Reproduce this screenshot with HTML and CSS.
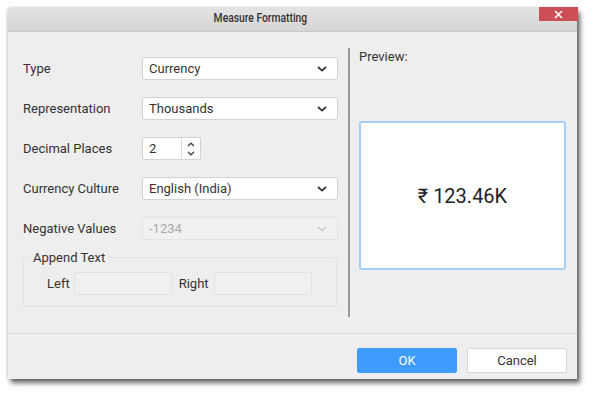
FILE: index.html
```html
<!DOCTYPE html>
<html>
<head>
<meta charset="utf-8">
<link rel="stylesheet" href="styles.css">
</head>
<body>
<div class="dialog">
  <div class="titlebar"><span class="title">Measure Formatting</span></div>
  <button class="close" aria-label="Close"><svg width="9" height="9" viewBox="0 0 9 9"><path d="M1 1L8 8M8 1L1 8" stroke="#fff" stroke-width="1.6" fill="none"/></svg></button>
  <div class="content">
    <div class="left">
      <div class="row"><span class="label">Type</span><div class="select"><span>Currency</span><svg class="chev" width="10" height="6" viewBox="0 0 10 6"><path d="M1 1L5 4.6L9 1" stroke="#333" stroke-width="1.8" fill="none"/></svg></div></div>
      <div class="row"><span class="label">Representation</span><div class="select"><span>Thousands</span><svg class="chev" width="10" height="6" viewBox="0 0 10 6"><path d="M1 1L5 4.6L9 1" stroke="#333" stroke-width="1.8" fill="none"/></svg></div></div>
      <div class="row"><span class="label">Decimal Places</span><div class="numeric"><span class="num">2</span><span class="spin"><svg width="8" height="5" viewBox="0 0 8 5"><path d="M1 4L4 1.2L7 4" stroke="#444" stroke-width="1.4" fill="none"/></svg><svg width="8" height="5" viewBox="0 0 8 5"><path d="M1 1L4 3.8L7 1" stroke="#444" stroke-width="1.4" fill="none"/></svg></span></div></div>
      <div class="row"><span class="label">Currency Culture</span><div class="select"><span>English (India)</span><svg class="chev" width="10" height="6" viewBox="0 0 10 6"><path d="M1 1L5 4.6L9 1" stroke="#333" stroke-width="1.8" fill="none"/></svg></div></div>
      <div class="row"><span class="label">Negative Values</span><div class="select disabled"><span>-1234</span><svg class="chev" width="10" height="6" viewBox="0 0 10 6"><path d="M1 1L5 4.6L9 1" stroke="#ccc" stroke-width="1.6" fill="none"/></svg></div></div>
      <fieldset class="append">
        <legend>Append Text</legend>
        <div class="append-row">
          <span class="alabel">Left</span><span class="tinput"></span>
          <span class="alabel right">Right</span><span class="tinput"></span>
        </div>
      </fieldset>
    </div>
    <div class="divider"></div>
    <div class="rightpanel">
      <div class="plabel">Preview:</div>
      <div class="preview">₹ 123.46K</div>
    </div>
  </div>
  <div class="footer">
    <button class="btn ok">OK</button>
    <button class="btn cancel">Cancel</button>
  </div>
</div>
</body>
</html>
```

FILE: styles.css
```css
html, body {
  margin: 0;
  padding: 0;
  background: #ffffff;
  min-height: 393px;
}
body {
  font-family: Roboto, "Liberation Sans", sans-serif;
  font-size: 13px;
  color: #333;
  padding-top: 8px;
  box-sizing: border-box;
}
.dialog {
  position: relative;
  margin: 0 0 0 8px;
  width: 569px;
  height: 371px;
  background: #eeeeee;
  box-shadow: 3px 4px 5px rgba(0,0,0,0.6), 0 0 3px rgba(0,0,0,0.25);
  display: flex;
  flex-direction: column;
}
.titlebar {
  height: 23px;
  flex: none;
  border-bottom: 1px solid #c9c9c9;
  background: linear-gradient(#e4e3e4, #d6d5d6);
  display: flex;
  align-items: center;
  justify-content: center;
  padding-right: 65px;
}
.title {
  display: inline-block;
  font-size: 12px;
  font-weight: 500;
  line-height: 14px;
  color: #333;
  transform: scaleX(0.86);
  margin-top: -3px;
}
.close {
  position: absolute;
  right: -1px;
  top: -1px;
  width: 39px;
  height: 14px;
  border: none;
  padding: 0;
  background: #cc4f55;
  display: flex;
  align-items: center;
  justify-content: center;
}
.content {
  height: 301px;
  flex: none;
  display: flex;
}
.left {
  width: 315px;
  padding: 25px 10px 0 15px;
}
.row {
  display: flex;
  align-items: center;
  height: 23px;
  margin-bottom: 17px;
}
.label {
  width: 119px;
  flex: none;
}
.select {
  border: 1px solid #d2d2d2;
  border-radius: 2px;
  background: #fff;
  display: flex;
  align-items: center;
  justify-content: space-between;
  padding: 0 10px 0 6px;
  box-sizing: border-box;
  width: 196px;
  height: 23px;
}
.select.disabled {
  background: #f1f1f1;
  border-color: #e4e4e4;
  color: #aaa;
}
.numeric {
  width: 59px;
  height: 23px;
  box-sizing: border-box;
  border: 1px solid #d2d2d2;
  border-radius: 2px;
  background: #fff;
  display: flex;
}
.num {
  width: 39px;
  border-right: 1px solid #dcdcdc;
  padding-left: 6px;
  box-sizing: border-box;
  display: flex;
  align-items: center;
}
.spin {
  flex: 1;
  display: flex;
  flex-direction: column;
  align-items: center;
  justify-content: center;
  gap: 4px;
}
.spin svg { display: block; }
.append {
  margin: -7px 0 0 0;
  padding: 7px 0 11px 0;
  border: 1px solid #dde2e6;
  border-radius: 3px;
  width: 312px;
}
.append legend {
  margin-left: 6px;
  padding: 0 3px;
  line-height: 15px;
}
.append-row {
  display: flex;
  align-items: center;
  padding-left: 23px;
}
.alabel { margin-right: 4px; }
.alabel.right { margin-left: 7px; margin-right: 5px; }
.tinput {
  width: 98px;
  height: 23px;
  box-sizing: border-box;
  border: 1px solid #e2e2e2;
  background: #f0f0f0;
  border-radius: 2px;
}
.divider {
  width: 2px;
  margin: 16px 0;
  background: #9a9a9a;
  flex: none;
}
.rightpanel {
  flex: 1;
  padding: 17px 11px 0 9px;
}
.plabel {
  line-height: 16px;
}
.preview {
  margin-top: 56px;
  height: 145px;
  border: 2px solid #a5cff6;
  border-radius: 3px;
  background: #fff;
  display: flex;
  align-items: center;
  justify-content: center;
  font-size: 20px;
  color: #222;
}
.footer {
  flex: 1;
  border-top: 1px solid #dadada;
  display: flex;
  justify-content: flex-end;
  align-items: flex-start;
  padding: 14px 10px 0 0;
  gap: 10px;
}
.btn {
  width: 100px;
  height: 25px;
  font-family: Roboto, "Liberation Sans", sans-serif;
  font-size: 13px;
  border-radius: 2px;
  padding: 0;
}
.ok {
  background: #3d9cfd;
  border: 1px solid #3d9cfd;
  color: #fff;
}
.cancel {
  background: #fff;
  border: 1px solid #d6d6d6;
  color: #333;
}
```
